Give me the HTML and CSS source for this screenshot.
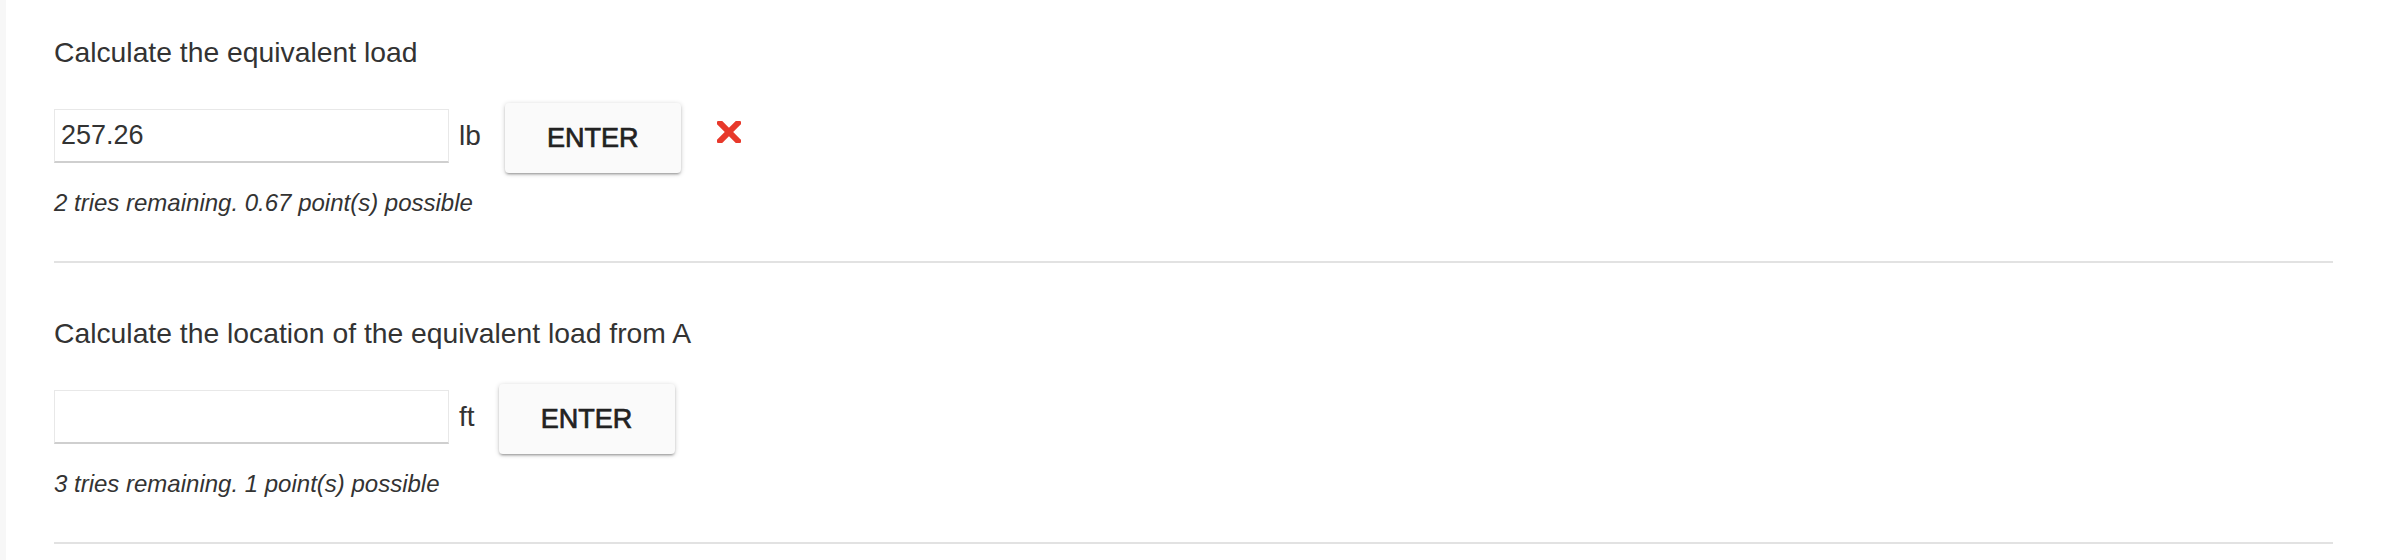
FILE: index.html
```html
<!DOCTYPE html>
<html lang="en">
<head>
<meta charset="utf-8">
<title>Equivalent load</title>
<link rel="stylesheet" href="styles.css">
</head>
<body>
<div class="page">
  <div class="content">
    <section class="part">
      <p class="question">Calculate the equivalent load</p>
      <div class="answer-row">
        <input class="answer" type="text" value="257.26">
        <span class="unit">lb</span>
        <button class="enter" type="button">ENTER</button>
        <span class="wrong" aria-label="incorrect">
          <svg viewBox="0 0 24 22" width="24" height="22"><path d="M3 2 L21 20 M21 2 L3 20" stroke="#e8392b" stroke-width="6" stroke-linecap="square" fill="none"/></svg>
        </span>
      </div>
      <p class="tries">2 tries remaining. 0.67 point(s) possible</p>
    </section>
    <section class="part">
      <p class="question">Calculate the location of the equivalent load from A</p>
      <div class="answer-row">
        <input class="answer" type="text" value="">
        <span class="unit">ft</span>
        <button class="enter" type="button">ENTER</button>
      </div>
      <p class="tries">3 tries remaining. 1 point(s) possible</p>
    </section>
  </div>
</div>
</body>
</html>
```
FILE: styles.css
```css
* { box-sizing: border-box; }
html, body {
  margin: 0;
  padding: 0;
  background: #ffffff;
}
body {
  font-family: "Liberation Sans", Arial, Helvetica, sans-serif;
  color: #333333;
}
.page {
  border-left: 6px solid #f7f7f7;
  min-height: 100vh;
}
.content {
  padding: 36px 63px 0 48px;
}
.part {
  padding: 54px 0 44px;
  border-bottom: 2px solid #e2e2e2;
}
.part:first-child {
  padding-top: 0;
}
.question {
  margin: 0;
  font-size: 28.3px;
  line-height: 32px;
  color: #333333;
}
.answer-row {
  display: flex;
  align-items: center;
  margin-top: 35px;
  height: 70px;
}
.answer {
  width: 395px;
  height: 54px;
  margin: 0 0 4px 0;
  padding: 0 6px;
  border: 1px solid #e8e8e8;
  border-bottom: 2px solid #cfcfcf;
  background: #ffffff;
  font-family: "Liberation Sans", Arial, Helvetica, sans-serif;
  font-size: 27px;
  color: #333333;
  outline: none;
}
.unit {
  margin: 0 24px 4px 10px;
  font-size: 28px;
  line-height: 32px;
  color: #333333;
}
.enter {
  width: 176px;
  height: 70px;
  padding: 0;
  border: none;
  border-radius: 4px;
  background: #fafafa;
  box-shadow: 0 2px 2px 0 rgba(0,0,0,0.14), 0 3px 1px -2px rgba(0,0,0,0.12), 0 1px 5px 0 rgba(0,0,0,0.2);
  font-family: "Liberation Sans", Arial, Helvetica, sans-serif;
  font-size: 27px;
  font-weight: normal;
  -webkit-text-stroke: 0.7px #222222;
  color: #222222;
  cursor: pointer;
}
.wrong {
  display: flex;
  margin: 0 0 12px 36px;
  width: 24px;
  height: 22px;
}
.tries {
  margin: 16px 0 0;
  font-size: 24px;
  line-height: 28px;
  font-style: italic;
  color: #333333;
}
```
